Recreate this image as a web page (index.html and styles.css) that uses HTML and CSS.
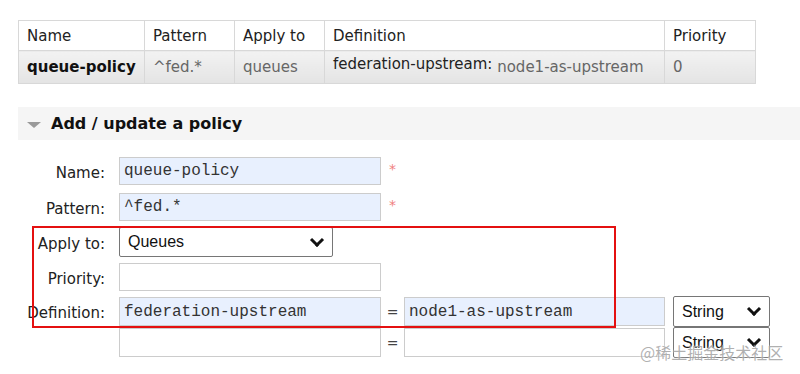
FILE: index.html
```
<!DOCTYPE html>
<html lang="en">
<head>
    <meta charset="UTF-8">
    <title>Policies</title>
    <link rel="stylesheet" href="styles.css">
</head>
<body>
    <table class="policies">
        <thead>
            <tr>
                <th class="col-name">Name</th>
                <th class="col-pattern">Pattern</th>
                <th class="col-apply">Apply to</th>
                <th class="col-def">Definition</th>
                <th class="col-prio">Priority</th>
            </tr>
        </thead>
        <tbody>
            <tr>
                <td class="strong">queue-policy</td>
                <td>^fed.*</td>
                <td>queues</td>
                <td><span class="def-key">federation-upstream:</span> node1-as-upstream</td>
                <td>0</td>
            </tr>
        </tbody>
    </table>

    <div class="section-head">
        <span class="arrow"></span>
        <h2>Add / update a policy</h2>
    </div>

    <form class="policy-form">
        <div class="row">
            <label>Name:</label>
            <input type="text" class="filled" value="queue-policy">
            <span class="req">*</span>
        </div>
        <div class="row">
            <label>Pattern:</label>
            <input type="text" class="filled" value="^fed.*">
            <span class="req">*</span>
        </div>
        <div class="row row-apply">
            <label>Apply to:</label>
            <div class="select apply-select">Queues<span class="chev"></span></div>
        </div>
        <div class="row row-prio">
            <label>Priority:</label>
            <input type="text">
        </div>
        <div class="row row-def">
            <label>Definition:</label>
            <input type="text" class="filled" value="federation-upstream">
            <span class="eq">=</span>
            <input type="text" class="filled val" value="node1-as-upstream">
            <div class="select type-select">String<span class="chev"></span></div>
        </div>
        <div class="row row-def">
            <label></label>
            <input type="text">
            <span class="eq">=</span>
            <input type="text" class="val">
            <div class="select type-select">String<span class="chev"></span></div>
        </div>
    </form>

    <div class="highlight"></div>
    <div class="watermark">@稀土掘金技术社区</div>
</body>
</html>
```
FILE: styles.css
```
body {
    margin: 0;
    padding: 20px 0 0 0;
    font-family: "DejaVu Sans", Verdana, sans-serif;
    color: #222;
    background: #fff;
    height: 374px;
    overflow: hidden;
    box-sizing: border-box;
    position: relative;
}
.policies {
    margin-left: 18px;
    border-collapse: collapse;
    font-size: 15px;
}
.policies th, .policies td {
    border: 1px solid #d8d8d8;
    text-align: left;
    padding: 0 8px;
}
.policies th {
    font-weight: normal;
    height: 29px;
    color: #222;
    background: #fff;
}
.policies td {
    height: 32px;
    color: #666;
    background: linear-gradient(#f2f2f2, #e4e4e4);
    vertical-align: middle;
}
.col-name { width: 109px; }
.col-pattern { width: 73px; }
.col-apply { width: 73px; }
.col-def { width: 323px; }
.col-prio { width: 74px; }
.policies td.strong {
    font-weight: bold;
    color: #111;
}
.def-key {
    color: #222;
    position: relative;
    top: -3px;
}
.section-head {
    margin: 23px 0 0 18px;
    height: 33px;
    background: #f5f5f5;
    display: flex;
    align-items: center;
    padding-left: 9px;
}
.arrow {
    width: 0;
    height: 0;
    border-left: 7px solid transparent;
    border-right: 7px solid transparent;
    border-top: 6px solid #9a9a9a;
    margin-right: 10px;
    margin-top: 2px;
}
.section-head h2 {
    margin: 0;
    font-size: 16px;
    font-weight: bold;
    color: #111;
}
.policy-form {
    margin-top: 17px;
}
.row {
    display: flex;
    align-items: center;
    margin-bottom: 8px;
}
.row label {
    width: 105px;
    text-align: right;
    font-size: 15px;
    color: #222;
    margin-right: 14px;
    padding-top: 3px;
}
.row input {
    width: 262px;
    height: 28px;
    box-sizing: border-box;
    border: 1px solid #ccc;
    background: #fff;
    font-family: "Liberation Mono", "Courier New", monospace;
    font-size: 16px;
    color: #333;
    padding: 0 4px;
    margin: 0;
}
.row input.filled {
    background: #e8f0fe;
}
.req {
    color: #f08080;
    font-size: 14px;
    margin-left: 8px;
    align-self: flex-start;
    margin-top: 4px;
}
.row-apply {
    margin-top: -2px;
    margin-bottom: 6px;
}
.row-prio {
    margin-bottom: 5px;
}
.select {
    box-sizing: border-box;
    border: 1px solid #767676;
    border-radius: 2px;
    background: #fff;
    font-family: "Liberation Sans", Arial, sans-serif;
    font-size: 16px;
    color: #111;
    display: flex;
    align-items: center;
    justify-content: space-between;
    padding: 0 8px 0 8px;
}
.apply-select {
    width: 214px;
    height: 30px;
}
.chev {
    width: 7px;
    height: 7px;
    border-right: 3px solid #111;
    border-bottom: 3px solid #111;
    transform: rotate(45deg);
    margin-top: -5px;
    margin-right: 2px;
}
.row-def {
    margin-bottom: 0;
}
.row-def input {
    height: 29px;
}
.eq {
    width: 23px;
    text-align: center;
    font-size: 14px;
    color: #444;
}
.row-def input.val {
    width: 261px;
}
.type-select {
    width: 97px;
    height: 31px;
    margin-left: 8px;
}
.highlight {
    position: absolute;
    left: 32px;
    top: 226px;
    width: 580px;
    height: 98px;
    border: 2px solid #e41010;
}
.watermark {
    position: absolute;
    left: 640px;
    top: 340px;
    font-family: "Noto Sans CJK SC", sans-serif;
    font-size: 16px;
    color: rgba(150, 150, 150, 0.75);
    text-shadow: 0 0 2px #fff;
}
```
